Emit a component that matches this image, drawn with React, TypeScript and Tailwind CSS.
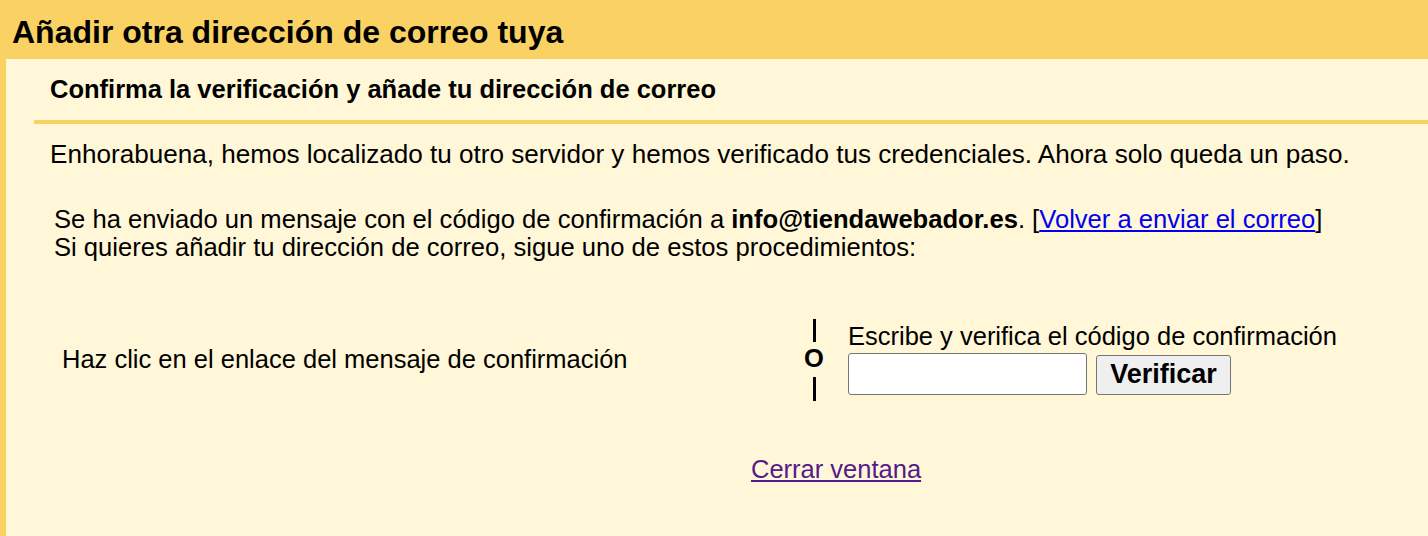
import React from "react";

export default function App() {
  return (
    <div className="w-[1428px] h-[536px] bg-[#fad163] font-['Liberation_Sans',Arial,sans-serif] text-black flex flex-col overflow-hidden">
      <div className="h-[59px] shrink-0 pl-[12px] pt-[16px]">
        <h1 className="text-[32px] font-bold leading-[32px]">Añadir otra dirección de correo tuya</h1>
      </div>
      <div className="ml-[6px] flex-1 bg-[#fff7d7] flex flex-col">
        <div className="ml-[28px] h-[65px] shrink-0 pl-[16px] flex items-center border-b-[4px] border-[#fad163]">
          <h2 className="text-[25.5px] font-bold leading-none">Confirma la verificación y añade tu dirección de correo</h2>
        </div>
        <p className="pl-[44px] mt-[15px] text-[26.1px] leading-[30px]">
          Enhorabuena, hemos localizado tu otro servidor y hemos verificado tus credenciales. Ahora solo queda un paso.
        </p>
        <div className="pl-[48px] mt-[36px] text-[25.6px] leading-[28px]">
          <div>
            Se ha enviado un mensaje con el código de confirmación a <b>info@tiendawebador.es</b>. [
            <a href="#" className="text-[#0000ee] underline">Volver a enviar el correo</a>]
          </div>
          <div>Si quieres añadir tu dirección de correo, sigue uno de estos procedimientos:</div>
        </div>
        <div className="flex items-start mt-[58px]">
          <div className="pl-[56px] w-[798px] shrink-0 mt-[25px] text-[25.5px] leading-[30px]">
            Haz clic en el enlace del mensaje de confirmación
          </div>
          <div className="w-[20px] shrink-0 flex flex-col items-center text-[25.5px] font-bold leading-none">
            <div className="w-[3px] h-[23px] bg-black" />
            <div className="mt-[4px] mb-[5px]">O</div>
            <div className="w-[3px] h-[24px] bg-black" />
          </div>
          <div className="ml-[24px] mt-[3px] flex flex-col">
            <div className="text-[25.5px] leading-[28px]">Escribe y verifica el código de confirmación</div>
            <div className="flex items-center gap-[9px] mt-[3px]">
              <input className="w-[239px] h-[42px] bg-white border border-[#767676] rounded-[3px] outline-none" />
              <button className="w-[135px] h-[40px] mt-[1px] bg-[#efefef] border border-[#767676] rounded-[3px] text-[27px] font-bold leading-none">
                Verificar
              </button>
            </div>
          </div>
        </div>
        <div className="mt-[53px] pl-[745px] text-[25.5px] leading-[30px]">
          <a href="#" className="text-[#551a8b] underline">Cerrar ventana</a>
        </div>
      </div>
    </div>
  );
}
